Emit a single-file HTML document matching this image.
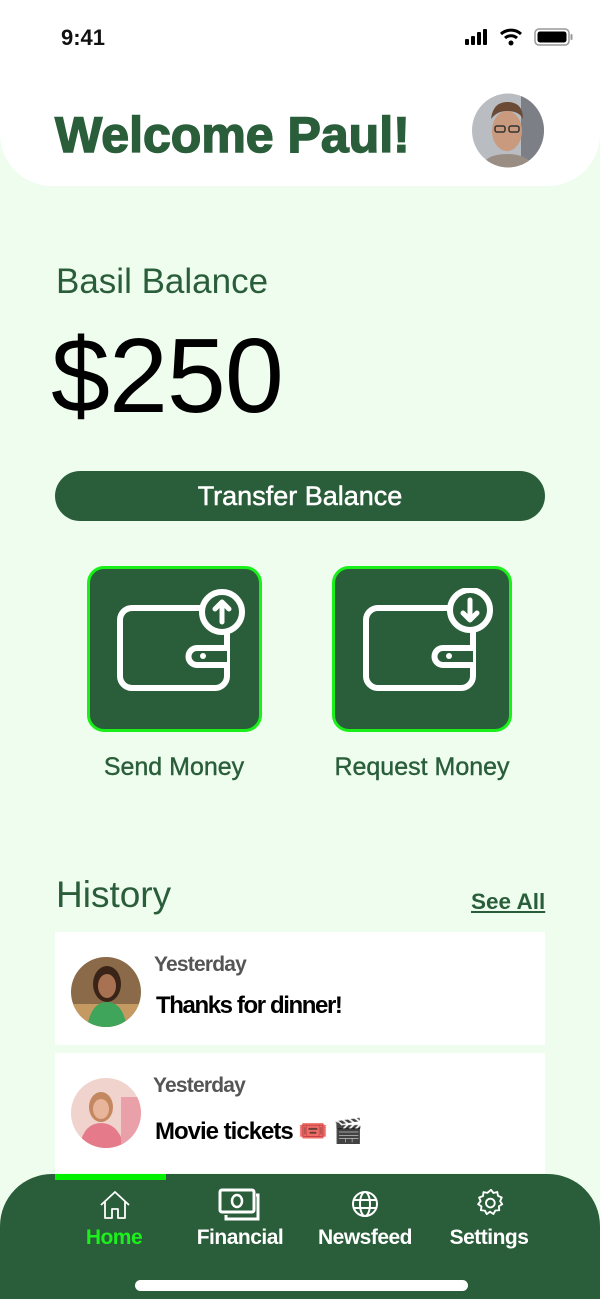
<!DOCTYPE html>
<html><head><style>
*{margin:0;padding:0;box-sizing:border-box}
body{width:600px;height:1299px;background:#effdef;font-family:"Liberation Sans",sans-serif;position:relative;overflow:hidden}
.a{position:absolute}
.g{color:#2a5e3a}
</style></head><body>
<div class="a" style="left:0;top:0;width:600px;height:186px;background:#fff;border-radius:0 0 52px 52px"></div>
<div class="a" style="left:61px;top:25px;font-size:22px;font-weight:bold;color:#111">9:41</div>
<svg class="a" style="left:464px;top:27px" width="110" height="22" viewBox="0 0 110 22">
<rect x="1" y="12" width="4" height="6" rx="1" fill="#000"/><rect x="7" y="9" width="4" height="9" rx="1" fill="#000"/><rect x="13" y="5" width="4" height="13" rx="1" fill="#000"/><rect x="19" y="2" width="4" height="16" rx="1" fill="#000"/>
<path d="M37 7a15 15 0 0 1 20 0" stroke="#000" stroke-width="3" fill="none"/><path d="M41 11a9 9 0 0 1 12 0" stroke="#000" stroke-width="3" fill="none"/><circle cx="47" cy="16" r="2.5" fill="#000"/>
<rect x="71" y="2" width="34" height="16" rx="4" fill="none" stroke="#999" stroke-width="1.5"/><rect x="73.5" y="4.5" width="29" height="11" rx="2.5" fill="#000"/><rect x="106.5" y="7" width="2" height="6" rx="1" fill="#999"/>
</svg>
<div class="a g" style="left:55px;top:106px;font-size:50px;font-weight:900;-webkit-text-stroke:1.5px #2a5e3a">Welcome Paul!</div>
<svg class="a" style="left:471px;top:93px" width="74" height="75" viewBox="0 0 74 75">
<defs><clipPath id="c"><ellipse cx="37" cy="37.5" rx="36" ry="37"/></clipPath></defs>
<g clip-path="url(#c)"><rect width="74" height="75" fill="#b9bcc0"/><rect x="50" width="24" height="75" fill="#7c8086"/>
<ellipse cx="36" cy="38" rx="15" ry="20" fill="#c99a7d"/><path d="M20 26q2-18 18-17q14 1 14 17q-4-8-16-8q-10 0-16 8z" fill="#6b4a36"/>
<path d="M10 75q4-14 26-14q22 0 26 14z" fill="#9a8e84"/>
<rect x="24" y="33" width="10" height="6" rx="2" fill="none" stroke="#333" stroke-width="1.5"/><rect x="38" y="33" width="10" height="6" rx="2" fill="none" stroke="#333" stroke-width="1.5"/></g></svg>
<div class="a g" style="left:56px;top:262px;font-size:35px">Basil Balance</div>
<div class="a" style="left:51px;top:316px;font-size:106px;color:#000;letter-spacing:-1px">$250</div>
<div class="a" style="left:55px;top:471px;width:490px;height:50px;border-radius:25px;background:#2a5e3a;color:#fff;font-size:27px;text-align:center;line-height:50px;-webkit-text-stroke:0.5px #fff">Transfer Balance</div>
<div class="a" style="left:87px;top:566px;width:175px;height:166px;border-radius:17px;background:#2a5e3a;border:3px solid #19f019"></div>
<div class="a" style="left:332px;top:566px;width:180px;height:166px;border-radius:17px;background:#2a5e3a;border:3px solid #19f019"></div>
<svg class="a" style="left:117px;top:588px" width="130" height="105" viewBox="0 0 130 105">
<path d="M88 20H15a12 12 0 0 0-12 12v56a12 12 0 0 0 12 12h83a12 12 0 0 0 12-12V40" stroke="#fff" stroke-width="6" fill="none" stroke-linecap="round"/>
<path d="M110 60H80a8.5 8.5 0 0 0 0 17H110" stroke="#fff" stroke-width="6" fill="#2a5e3a"/><circle cx="86" cy="68" r="3" fill="#fff"/>
<circle cx="105" cy="24" r="20" stroke="#fff" stroke-width="6" fill="#2a5e3a"/><path d="M105 34V14M98 21l7-7 7 7" stroke="#fff" stroke-width="5" fill="none" stroke-linecap="round" stroke-linejoin="round"/></svg>
<svg class="a" style="left:363px;top:588px" width="130" height="105" viewBox="0 0 130 105">
<path d="M88 20H15a12 12 0 0 0-12 12v56a12 12 0 0 0 12 12h83a12 12 0 0 0 12-12V40" stroke="#fff" stroke-width="6" fill="none" stroke-linecap="round"/>
<path d="M110 60H80a8.5 8.5 0 0 0 0 17H110" stroke="#fff" stroke-width="6" fill="#2a5e3a"/><circle cx="86" cy="68" r="3" fill="#fff"/>
<circle cx="107" cy="22" r="20" stroke="#fff" stroke-width="6" fill="#2a5e3a"/><path d="M107 12V32M100 25l7 7 7-7" stroke="#fff" stroke-width="5" fill="none" stroke-linecap="round" stroke-linejoin="round"/></svg>
<div class="a g" style="left:74px;top:753px;width:200px;text-align:center;font-size:25px;-webkit-text-stroke:0.4px #2a5e3a">Send Money</div>
<div class="a g" style="left:322px;top:753px;width:200px;text-align:center;font-size:25px;-webkit-text-stroke:0.4px #2a5e3a">Request Money</div>
<div class="a g" style="left:56px;top:874px;font-size:37px">History</div>
<div class="a g" style="left:471px;top:889px;font-size:22.5px;font-weight:bold;text-decoration:underline">See All</div>
<div class="a" style="left:55px;top:932px;width:490px;height:113px;background:#fff"></div>
<div class="a" style="left:55px;top:1053px;width:490px;height:120px;background:#fff"></div>
<svg class="a" style="left:71px;top:956px" width="70" height="72"><defs><clipPath id="d"><circle cx="35" cy="36" r="35"/></clipPath></defs><g clip-path="url(#d)"><rect width="70" height="72" fill="#8a6a48"/><rect y="48" width="70" height="24" fill="#c49a62"/><ellipse cx="36" cy="28" rx="14" ry="18" fill="#3a2418"/><ellipse cx="36" cy="30" rx="9" ry="12" fill="#a87252"/><path d="M16 72q4-26 20-26q16 0 20 26z" fill="#3ea55a"/></g></svg>
<svg class="a" style="left:71px;top:1077px" width="70" height="72"><defs><clipPath id="e"><circle cx="35" cy="36" r="35"/></clipPath></defs><g clip-path="url(#e)"><rect width="70" height="72" fill="#efd3cc"/><ellipse cx="30" cy="30" rx="12" ry="15" fill="#c48860"/><ellipse cx="30" cy="32" rx="8" ry="10" fill="#e8b49a"/><path d="M8 72q4-26 22-26q18 0 24 26z" fill="#e47a8a"/><rect x="50" y="20" width="20" height="52" fill="#e9a0a8"/></g></svg>
<div class="a" style="left:154px;top:953px;font-size:21px;font-weight:bold;color:#555;letter-spacing:-0.8px">Yesterday</div>
<div class="a" style="left:156px;top:992px;font-size:24px;font-weight:bold;color:#000;letter-spacing:-1.4px">Thanks for dinner!</div>
<div class="a" style="left:153px;top:1074px;font-size:21px;font-weight:bold;color:#555;letter-spacing:-0.8px">Yesterday</div>
<div class="a" style="left:155px;top:1117px;font-size:24px;font-weight:bold;color:#000;letter-spacing:-1px">Movie tickets 🎟️ 🎬</div>
<div class="a" style="left:0;top:1174px;width:600px;height:125px;background:#2a5e3a;border-radius:52px 52px 0 0"></div>
<div class="a" style="left:55px;top:1174px;width:111px;height:6px;background:#00f000"></div>
<svg class="a" style="left:98px;top:1190px" width="34" height="30" viewBox="0 0 34 30"><path d="M3 15L17 2l14 13M7 12v16h7v-9h6v9h7V12" stroke="#fff" stroke-width="1.8" fill="none" stroke-linejoin="round"/></svg>
<svg class="a" style="left:218px;top:1188px" width="44" height="34" viewBox="0 0 44 34"><rect x="2" y="2" width="34" height="22" rx="2" stroke="#fff" stroke-width="3" fill="none"/><ellipse cx="19" cy="13" rx="5" ry="6" stroke="#fff" stroke-width="2.5" fill="none"/><path d="M38 7h2v24H8v-4" stroke="#fff" stroke-width="3" fill="none"/></svg>
<svg class="a" style="left:350px;top:1189px" width="30" height="30" viewBox="0 0 30 30"><circle cx="15" cy="15" r="12" stroke="#fff" stroke-width="2" fill="none"/><ellipse cx="15" cy="15" rx="5" ry="12" stroke="#fff" stroke-width="2" fill="none"/><path d="M3 11h24M3 19h24" stroke="#fff" stroke-width="2"/></svg>
<svg class="a" style="left:476px;top:1188px" width="30" height="30" viewBox="0 0 24 24"><path d="M12 1.5l2 2.5 3-.8.6 3.1 3 1.3-1.3 2.9L21 13l-2.7 1.6.3 3.2-3.1.2-1.6 2.8L11.2 19l-2.6 1.9-1.5-2.8-3.2-.3.5-3.1L1.7 13l2-2.5L2.5 7.6 5.6 6.5 6 3.3l3.1.6z" stroke="#fff" stroke-width="1.5" fill="none" stroke-linejoin="round"/><circle cx="11.5" cy="12" r="3.5" stroke="#fff" stroke-width="1.5" fill="none"/></svg>
<div class="a" style="left:64px;top:1226px;width:100px;text-align:center;font-size:21px;font-weight:bold;color:#1cf01c;letter-spacing:-0.5px">Home</div>
<div class="a" style="left:190px;top:1226px;width:100px;text-align:center;font-size:21px;font-weight:bold;color:#fff;letter-spacing:-0.5px">Financial</div>
<div class="a" style="left:315px;top:1226px;width:100px;text-align:center;font-size:21px;font-weight:bold;color:#fff;letter-spacing:-0.5px">Newsfeed</div>
<div class="a" style="left:439px;top:1226px;width:100px;text-align:center;font-size:21px;font-weight:bold;color:#fff;letter-spacing:-0.5px">Settings</div>
<div class="a" style="left:135px;top:1280px;width:333px;height:11px;border-radius:6px;background:#fff"></div>
</body></html>
